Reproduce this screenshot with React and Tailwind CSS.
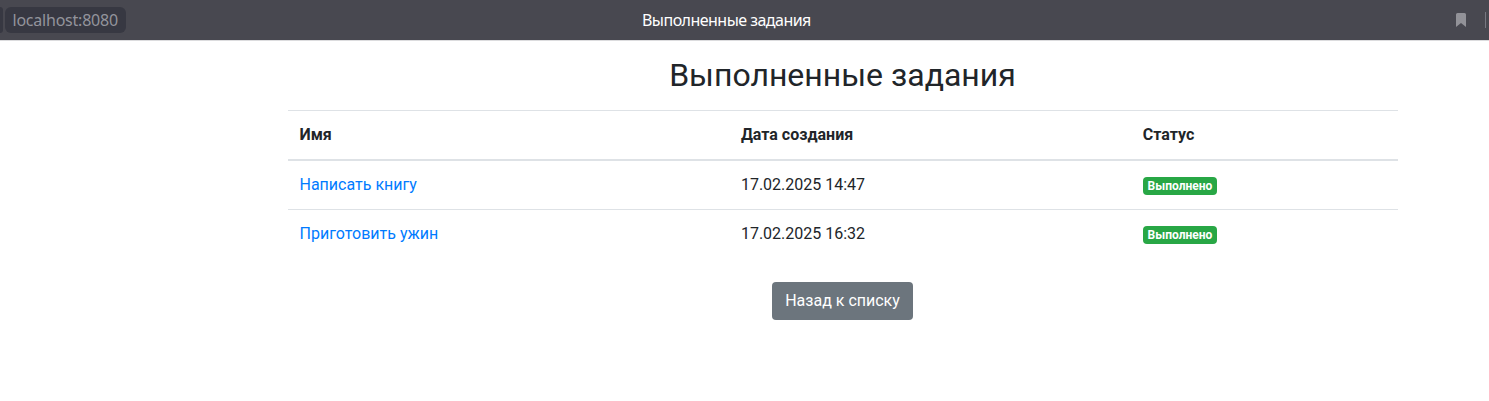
import React from "react";

const tasks = [
  { name: "Написать книгу", date: "17.02.2025 14:47" },
  { name: "Приготовить ужин", date: "17.02.2025 16:32" },
];

const columns = ["Имя", "Дата создания", "Статус"];

function BrowserBar() {
  return (
    <header className="relative flex h-[41px] items-center justify-between border-b border-[#dcdcde] bg-[#484850] font-['Noto_Sans',sans-serif] text-base">
      <div className="flex gap-[2px]">
        <span className="h-[26px] w-[3px] rounded-r-md bg-[#373842]" />
        <span className="flex h-[26px] w-[121px] items-center rounded-md bg-[#373842] pl-[7.5px] tracking-[-0.22px] text-[#93949c]">
          localhost:8080
        </span>
      </div>
      <div className="absolute left-[642px] whitespace-nowrap tracking-[-0.53px] text-white">Выполненные задания</div>
      <div className="flex items-center gap-[19px] pr-[3px]">
        <svg width="10" height="14" viewBox="0 0 10 14" fill="#929298">
          <path d="M1.5 0h7A1.5 1.5 0 0 1 10 1.5V14L5 10 0 14V1.5A1.5 1.5 0 0 1 1.5 0z" />
        </svg>
        <span className="h-4 w-px bg-[#777780]" />
      </div>
    </header>
  );
}

export default function App() {
  return (
    <div className="h-[401px] overflow-hidden bg-white font-[Roboto,sans-serif] text-base text-[#212529]">
      <BrowserBar />
      <main className="ml-[287.5px] flex w-[1110px] flex-col items-center pt-[15px]">
        <h2 className="mb-4 text-[32px] leading-[38.4px]">Выполненные задания</h2>
        <table className="mb-4 w-full table-fixed border-collapse text-left">
          <colgroup>
            <col className="w-[441.4px]" />
            <col className="w-[401.9px]" />
            <col />
          </colgroup>
          <thead>
            <tr>
              {columns.map((column) => (
                <th key={column} className="border-t border-b-2 border-[#dee2e6] p-3 align-bottom font-bold">{column}</th>
              ))}
            </tr>
          </thead>
          <tbody>
            {tasks.map((task) => (
              <tr key={task.name}>
                <td className="border-t border-[#dee2e6] p-3 align-top"><a href="#" className="text-[#007bff]">{task.name}</a></td>
                <td className="border-t border-[#dee2e6] p-3 align-top">{task.date}</td>
                <td className="border-t border-[#dee2e6] p-3 align-top">
                  <span className="inline-block rounded bg-[#28a745] px-[4.8px] py-[3px] align-baseline text-xs leading-3 font-bold text-white">Выполнено</span>
                </td>
              </tr>
            ))}
          </tbody>
        </table>
        <button className="mt-2 h-[38px] rounded bg-[#6c757d] px-[13px] text-white">Назад к списку</button>
      </main>
    </div>
  );
}
